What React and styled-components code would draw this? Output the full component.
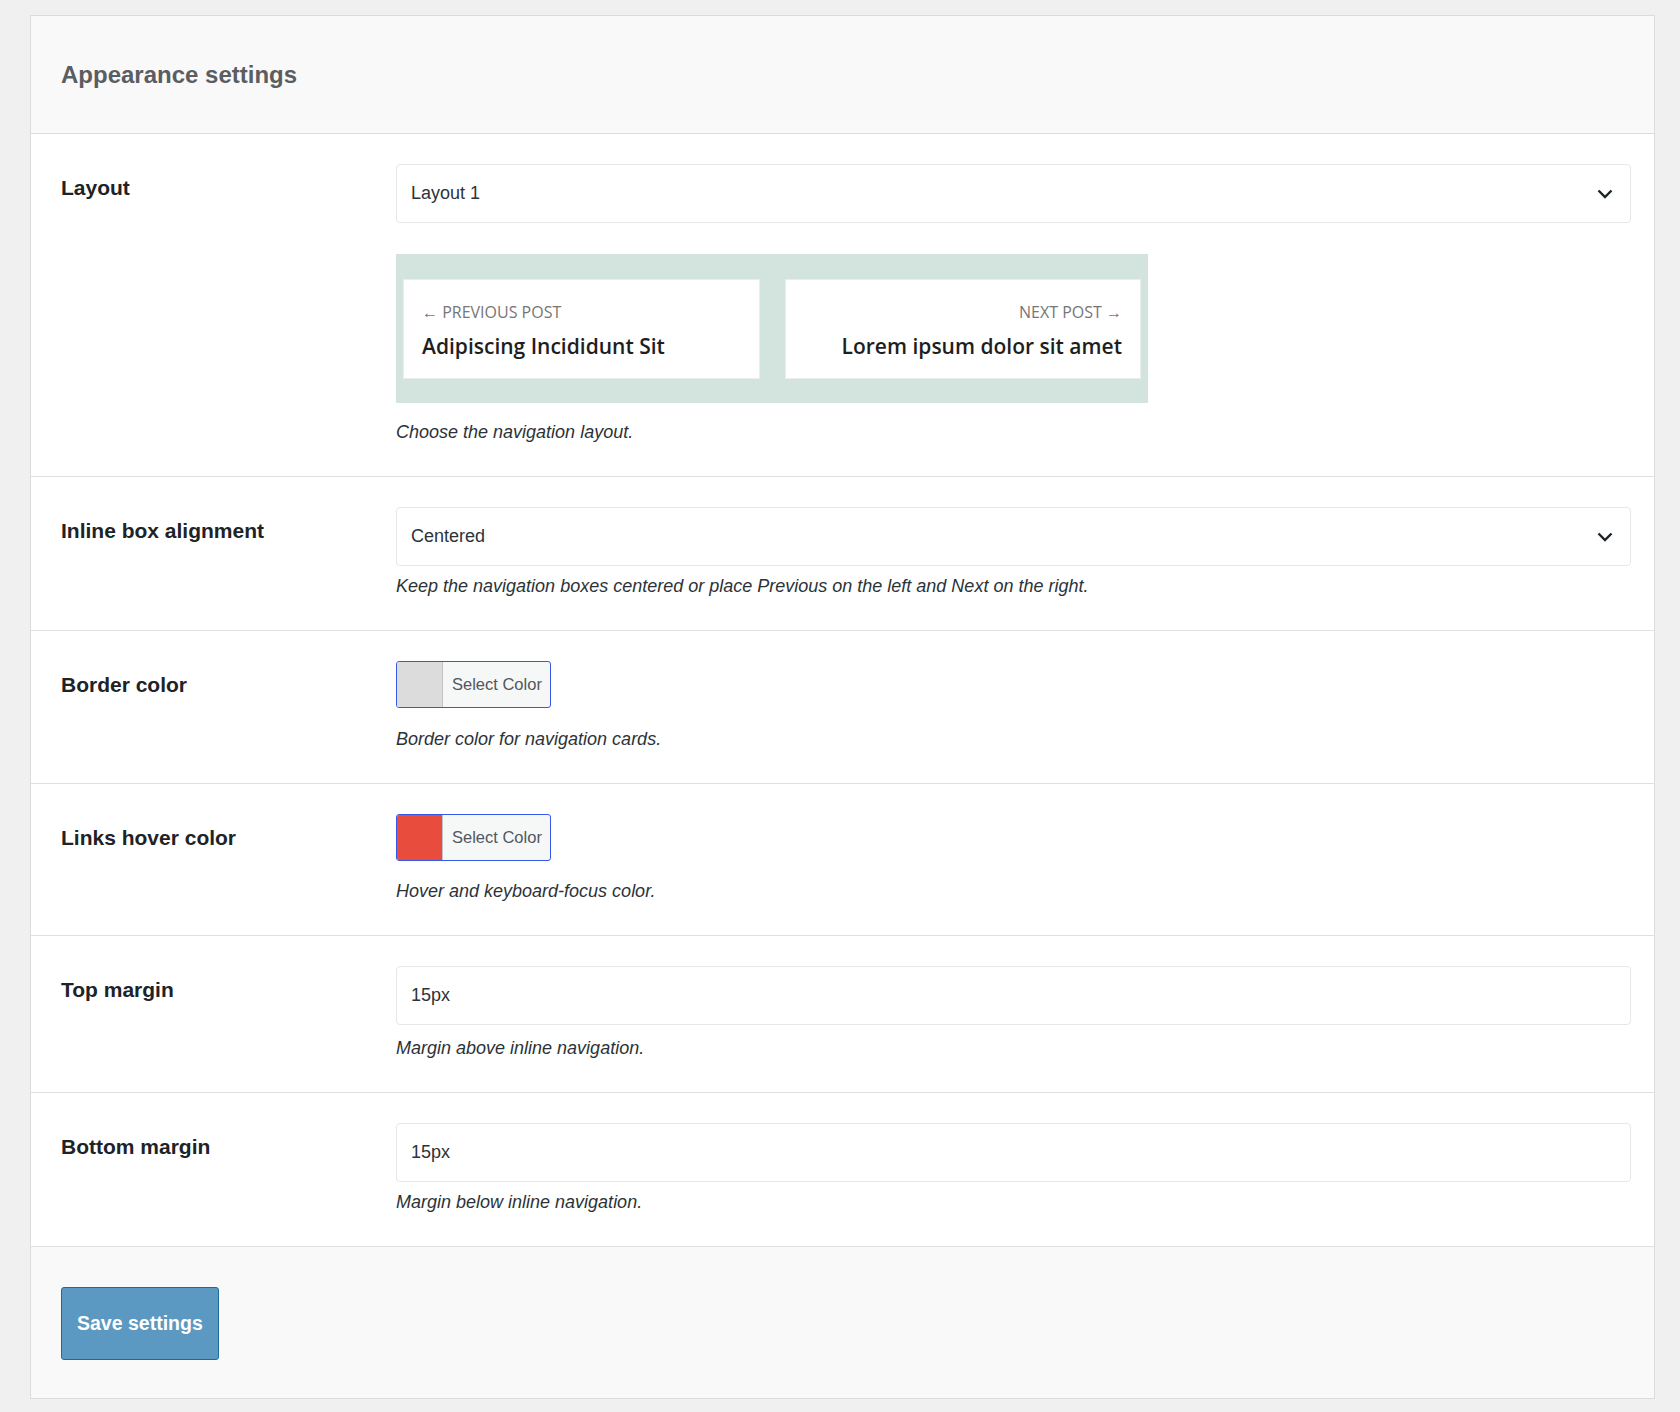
import React from "react";
import styled, { createGlobalStyle } from "styled-components";

const GlobalStyle = createGlobalStyle`
  html, body {
    margin: 0;
    padding: 0;
    background: #f0f0f1;
    font-family: "Liberation Sans", Arial, sans-serif;
    color: #1d2327;
  }
  * { box-sizing: border-box; }
`;

const Page = styled.div`
  padding: 15px 25px 15px 30px;
`;

const Card = styled.form`
  border: 1px solid #dcdcde;
  background: #fff;
`;

const Header = styled.div`
  height: 118px;
  display: flex;
  align-items: center;
  padding: 0 30px;
  background: #f9f9f9;
  border-bottom: 1px solid #dcdcde;
`;

const Title = styled.h2`
  margin: 0;
  font-size: 24px;
  font-weight: 700;
  color: #5a5d61;
`;

const Row = styled.div`
  display: grid;
  grid-template-columns: 335px 1fr;
  padding: 30px 23px 32px 30px;
  border-bottom: 1px solid #e0e0e0;
`;

const Label = styled.label`
  margin-top: 10px;
  font-size: 21px;
  font-weight: 700;
  line-height: 27px;
  color: #1d2327;
`;

const Field = styled.div`
  display: flex;
  flex-direction: column;
  align-items: flex-start;
`;

const SelectBox = styled.div`
  width: 100%;
  height: 59px;
  display: flex;
  align-items: center;
  justify-content: space-between;
  padding: 0 17px 0 14px;
  border: 1px solid #e6e7e9;
  border-radius: 4px;
  background: #fff;
  font-size: 18px;
  color: #2c3338;
`;

const TextInput = styled.input`
  width: 100%;
  height: 59px;
  padding: 0 14px;
  border: 1px solid #e6e7e9;
  border-radius: 4px;
  background: #fff;
  font-family: inherit;
  font-size: 18px;
  color: #2c3338;
  outline: none;
`;

const Desc = styled.p`
  margin: ${(p) => p.$gap || 8}px 0 0;
  font-size: 18px;
  font-style: italic;
  line-height: 24px;
  color: #2c3338;
`;

const Preview = styled.div`
  width: 752px;
  margin-top: 31px;
  padding: 25px 7px 24px;
  background: #d3e4df;
  display: grid;
  grid-template-columns: 1fr 1fr;
  gap: 25px;
  font-family: "Open Sans", "Liberation Sans", sans-serif;
`;

const NavCard = styled.div`
  background: #fff;
  border: 1px solid #e9eeec;
  padding: 21px 18px 17px;
  text-align: ${(p) => (p.$right ? "right" : "left")};
`;

const NavLabel = styled.div`
  font-size: 16px;
  line-height: 22px;
  color: #767676;
  text-transform: uppercase;
  margin-bottom: 8px;
`;

const NavTitle = styled.div`
  font-size: 21px;
  font-weight: 600;
  line-height: 30px;
  color: #1e1e1e;
`;

const ColorButton = styled.button`
  display: flex;
  height: 47px;
  padding: 0;
  border: 1px solid #3858e9;
  border-radius: 3px;
  background: #f6f7f7;
  overflow: hidden;
  cursor: pointer;
`;

const Swatch = styled.span`
  width: 46px;
  height: 100%;
  background: ${(p) => p.$color};
  border-right: 1px solid #c3c4c7;
`;

const ColorText = styled.span`
  display: flex;
  align-items: center;
  padding: 0 8px 0 9px;
  font-family: "Liberation Sans", Arial, sans-serif;
  font-size: 16.5px;
  color: #50575e;
`;

const Footer = styled.div`
  padding: 40px 30px 38px;
  background: #f9f9f9;
`;

const SaveButton = styled.button`
  height: 73px;
  padding: 0 15px;
  background: #5b99c2;
  border: 1px solid #1d6a9b;
  border-radius: 3px;
  color: #fff;
  font-family: "Liberation Sans", Arial, sans-serif;
  font-size: 19.5px;
  font-weight: 700;
  cursor: pointer;
`;

const Chevron = () => (
  <svg width="16" height="10" viewBox="0 0 16 10" fill="none">
    <path d="M1.5 1.5 L8 8 L14.5 1.5" stroke="#1d2327" strokeWidth="2.4" />
  </svg>
);

const Select = ({ value }) => (
  <SelectBox>
    <span>{value}</span>
    <Chevron />
  </SelectBox>
);

const ColorField = ({ color }) => (
  <ColorButton type="button">
    <Swatch $color={color} />
    <ColorText>Select Color</ColorText>
  </ColorButton>
);

export default function App() {
  return (
    <Page>
      <GlobalStyle />
      <Card>
        <Header>
          <Title>Appearance settings</Title>
        </Header>

        <Row>
          <Label>Layout</Label>
          <Field>
            <Select value="Layout 1" />
            <Preview>
              <NavCard>
                <NavLabel>← Previous post</NavLabel>
                <NavTitle>Adipiscing Incididunt Sit</NavTitle>
              </NavCard>
              <NavCard $right>
                <NavLabel>Next post →</NavLabel>
                <NavTitle>Lorem ipsum dolor sit amet</NavTitle>
              </NavCard>
            </Preview>
            <Desc $gap={17}>Choose the navigation layout.</Desc>
          </Field>
        </Row>

        <Row>
          <Label>Inline box alignment</Label>
          <Field>
            <Select value="Centered" />
            <Desc>
              Keep the navigation boxes centered or place Previous on the left
              and Next on the right.
            </Desc>
          </Field>
        </Row>

        <Row>
          <Label>Border color</Label>
          <Field>
            <ColorField color="#dcdcdc" />
            <Desc $gap={19}>Border color for navigation cards.</Desc>
          </Field>
        </Row>

        <Row>
          <Label>Links hover color</Label>
          <Field>
            <ColorField color="#e74c3c" />
            <Desc $gap={18}>Hover and keyboard-focus color.</Desc>
          </Field>
        </Row>

        <Row>
          <Label>Top margin</Label>
          <Field>
            <TextInput defaultValue="15px" />
            <Desc $gap={11}>Margin above inline navigation.</Desc>
          </Field>
        </Row>

        <Row>
          <Label>Bottom margin</Label>
          <Field>
            <TextInput defaultValue="15px" />
            <Desc>Margin below inline navigation.</Desc>
          </Field>
        </Row>

        <Footer>
          <SaveButton type="submit">Save settings</SaveButton>
        </Footer>
      </Card>
    </Page>
  );
}
